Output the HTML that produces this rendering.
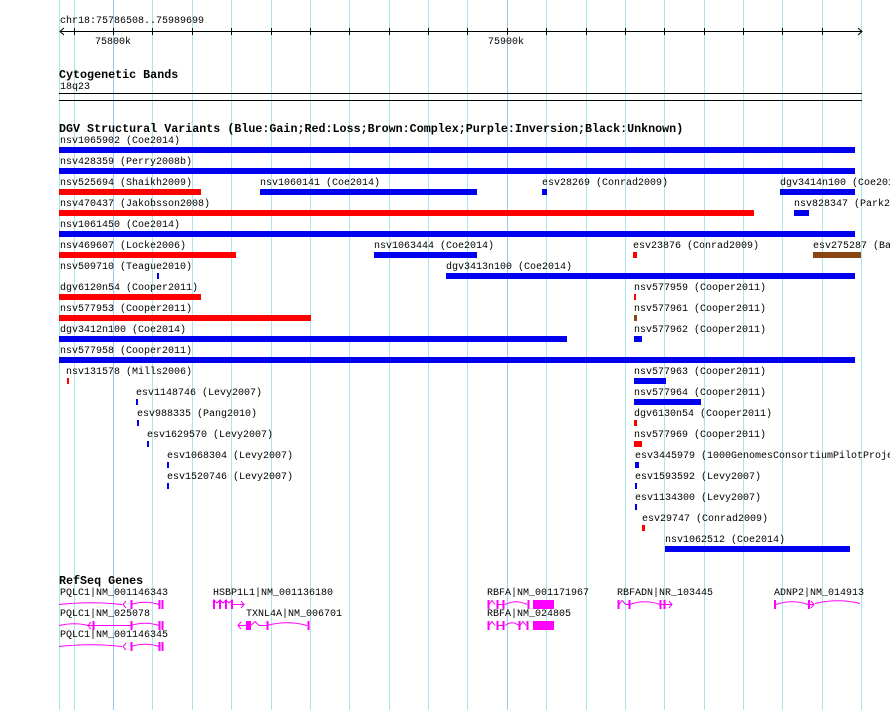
<!DOCTYPE html>
<html><head><meta charset="utf-8"><style>
html,body{margin:0;padding:0;background:#fff;width:890px;height:710px;overflow:hidden;position:relative}
.t{position:absolute;font-family:"Liberation Mono",monospace;font-size:10px;line-height:10px;white-space:nowrap;color:#000;margin-top:2px}
.b{position:absolute;font-family:"Liberation Mono",monospace;font-size:11.7px;font-weight:bold;line-height:12px;white-space:nowrap;color:#000;margin-top:1px}
.r{position:absolute;height:6px}
.bl{background:#0000ee}.rd{background:#ff0000}.br{background:#8b4513}
</style></head><body>
<svg style="position:absolute;left:0;top:0" width="890" height="710">
<g stroke="#a8e6ee" stroke-width="1">
<line x1="59.5" y1="0" x2="59.5" y2="710"/>
<line x1="74.5" y1="0" x2="74.5" y2="710"/><line x1="113.5" y1="0" x2="113.5" y2="710" stroke="#9cc8ea"/><line x1="152.5" y1="0" x2="152.5" y2="710"/><line x1="192.5" y1="0" x2="192.5" y2="710"/><line x1="231.5" y1="0" x2="231.5" y2="710"/><line x1="271.5" y1="0" x2="271.5" y2="710"/><line x1="310.5" y1="0" x2="310.5" y2="710"/><line x1="349.5" y1="0" x2="349.5" y2="710"/><line x1="389.5" y1="0" x2="389.5" y2="710"/><line x1="428.5" y1="0" x2="428.5" y2="710"/><line x1="467.5" y1="0" x2="467.5" y2="710"/><line x1="507.5" y1="0" x2="507.5" y2="710" stroke="#9cc8ea"/><line x1="546.5" y1="0" x2="546.5" y2="710"/><line x1="586.5" y1="0" x2="586.5" y2="710"/><line x1="625.5" y1="0" x2="625.5" y2="710"/><line x1="664.5" y1="0" x2="664.5" y2="710"/><line x1="704.5" y1="0" x2="704.5" y2="710"/><line x1="743.5" y1="0" x2="743.5" y2="710"/><line x1="782.5" y1="0" x2="782.5" y2="710"/><line x1="822.5" y1="0" x2="822.5" y2="710"/><line x1="861.5" y1="0" x2="861.5" y2="710"/>
</g>
<g stroke="#000" stroke-width="1" fill="none">
<line x1="60" y1="31.5" x2="862" y2="31.5"/>
<polyline points="64,28 60,31.5 64,35"/><polyline points="858,28 862,31.5 858,35"/>
<path d="M74.5 28v7M113.5 28v7M152.5 28v7M192.5 28v7M231.5 28v7M271.5 28v7M310.5 28v7M349.5 28v7M389.5 28v7M428.5 28v7M467.5 28v7M507.5 28v7M546.5 28v7M586.5 28v7M625.5 28v7M664.5 28v7M704.5 28v7M743.5 28v7M782.5 28v7M822.5 28v7"/>
<line x1="59" y1="93.5" x2="862" y2="93.5"/>
<line x1="59" y1="100.5" x2="862" y2="100.5"/>
</g>
<g stroke="#ff00ff" fill="none" stroke-width="1">
<path d="M59 604.5 Q90 601 122 604.5 M131 604.5 Q145 600 159 604.5"/>
<path d="M126 601l-3 3.5 3 3.5"/><path d="M131.5 600v9M159.5 600v9M162.5 600v9" stroke-width="2"/>
<path d="M59 625.5 Q75 622 88 625.5 L131 625.5 Q145 621 159 625.5"/>
<path d="M91 622l-3 3.5 3 3.5"/><path d="M93.5 621v9M131.5 621v9M159.5 621v9M162.5 621v9" stroke-width="2"/>
<path d="M59 646.5 Q90 643 122 646.5 M131 646.5 Q145 642 159 646.5"/>
<path d="M126 643l-3 3.5 3 3.5"/><path d="M131.5 642v9M159.5 642v9M162.5 642v9" stroke-width="2"/>
<path d="M214 609v-9l3 3 3-3v9M220 600l3 3 3-3v9M226 600l3 3 3-3v9M232 604.5h12M241 601l3 3.5-3 3.5" />
<path d="M214 600v9M220 600v9M226 600v9M232 600v9" stroke-width="2"/>
<path d="M238 625.5h9M241 622l-3 3.5 3 3.5M251 625.5l4-4 4 4h8 Q287 620 307 625.5"/>
<rect x="246" y="621" width="5" height="9" fill="#ff00ff" stroke="none"/>
<path d="M267.5 621v9M308.5 621v9" stroke-width="2"/>
<path d="M489 604.5l3-4 3 4M498 604.5h5 M505 604.5 Q516 599 527 604.5"/>
<path d="M488.5 600v9M497.5 600v9M503.5 600v9M528.5 600v9" stroke-width="2"/>
<rect x="533" y="600" width="21" height="9" fill="#ff00ff" stroke="none"/>
<path d="M489 625.5l3-4 3 4M498 625.5h5 M505 625.5 Q512 620 519 625.5M520 625.5l3-4 3 4"/>
<path d="M488.5 621v9M497.5 621v9M503.5 621v9M519.5 621v9M527.5 621v9" stroke-width="2"/>
<rect x="533" y="621" width="21" height="9" fill="#ff00ff" stroke="none"/>
<path d="M619 604.5l3-4 4 4h4 Q645 599 660 604.5h12M669 601l3 3.5-3 3.5"/>
<path d="M618.5 600v9M629.5 600v9M660.5 600v9M664.5 600v9" stroke-width="2"/>
<path d="M776 604.5 Q792 599 808 604.5h6M811 601l3 3.5-3 3.5M815 603.5 Q838 598 860 603.5"/>
<path d="M775 600v9M809 600v9" stroke-width="2"/>
</g>
</svg>

<div class="t" style="left:60px;top:15px">chr18:75786508..75989699</div>
<div class="t" style="left:95px;top:36px">75800k</div>
<div class="t" style="left:488px;top:36px">75900k</div>
<div class="b" style="left:59px;top:68px">Cytogenetic Bands</div>
<div class="t" style="left:60px;top:81px">18q23</div>
<div class="b" style="left:59px;top:122px">DGV Structural Variants (Blue:Gain;Red:Loss;Brown:Complex;Purple:Inversion;Black:Unknown)</div>

<div class="t" style="left:60px;top:135px">nsv1065902 (Coe2014)</div><div class="r bl" style="left:59px;width:796px;top:147px"></div>
<div class="t" style="left:60px;top:156px">nsv428359 (Perry2008b)</div><div class="r bl" style="left:59px;width:796px;top:168px"></div>
<div class="t" style="left:60px;top:177px">nsv525694 (Shaikh2009)</div><div class="r rd" style="left:59px;width:142px;top:189px"></div>
<div class="t" style="left:260px;top:177px">nsv1060141 (Coe2014)</div><div class="r bl" style="left:260px;width:217px;top:189px"></div>
<div class="t" style="left:542px;top:177px">esv28269 (Conrad2009)</div><div class="r bl" style="left:542px;width:5px;top:189px"></div>
<div class="t" style="left:780px;top:177px">dgv3414n100 (Coe2014)</div><div class="r bl" style="left:780px;width:75px;top:189px"></div>
<div class="t" style="left:60px;top:198px">nsv470437 (Jakobsson2008)</div><div class="r rd" style="left:59px;width:695px;top:210px"></div>
<div class="t" style="left:794px;top:198px">nsv828347 (Park2010)</div><div class="r bl" style="left:794px;width:15px;top:210px"></div>
<div class="t" style="left:60px;top:219px">nsv1061450 (Coe2014)</div><div class="r bl" style="left:59px;width:796px;top:231px"></div>
<div class="t" style="left:60px;top:240px">nsv469607 (Locke2006)</div><div class="r rd" style="left:59px;width:177px;top:252px"></div>
<div class="t" style="left:374px;top:240px">nsv1063444 (Coe2014)</div><div class="r bl" style="left:374px;width:103px;top:252px"></div>
<div class="t" style="left:633px;top:240px">esv23876 (Conrad2009)</div><div class="r rd" style="left:633px;width:4px;top:252px"></div>
<div class="t" style="left:813px;top:240px">esv275287 (Banerjee2011)</div><div class="r br" style="left:813px;width:48px;top:252px"></div>
<div class="t" style="left:60px;top:261px">nsv509710 (Teague2010)</div><div class="r bl" style="left:157px;width:2px;top:273px"></div>
<div class="t" style="left:446px;top:261px">dgv3413n100 (Coe2014)</div><div class="r bl" style="left:446px;width:409px;top:273px"></div>
<div class="t" style="left:60px;top:282px">dgv6120n54 (Cooper2011)</div><div class="r rd" style="left:59px;width:142px;top:294px"></div>
<div class="t" style="left:634px;top:282px">nsv577959 (Cooper2011)</div><div class="r rd" style="left:634px;width:2px;top:294px"></div>
<div class="t" style="left:60px;top:303px">nsv577953 (Cooper2011)</div><div class="r rd" style="left:59px;width:252px;top:315px"></div>
<div class="t" style="left:634px;top:303px">nsv577961 (Cooper2011)</div><div class="r br" style="left:634px;width:3px;top:315px"></div>
<div class="t" style="left:60px;top:324px">dgv3412n100 (Coe2014)</div><div class="r bl" style="left:59px;width:508px;top:336px"></div>
<div class="t" style="left:634px;top:324px">nsv577962 (Cooper2011)</div><div class="r bl" style="left:634px;width:8px;top:336px"></div>
<div class="t" style="left:60px;top:345px">nsv577958 (Cooper2011)</div><div class="r bl" style="left:59px;width:796px;top:357px"></div>
<div class="t" style="left:66px;top:366px">nsv131578 (Mills2006)</div><div class="r rd" style="left:67px;width:2px;top:378px"></div>
<div class="t" style="left:634px;top:366px">nsv577963 (Cooper2011)</div><div class="r bl" style="left:634px;width:32px;top:378px"></div>
<div class="t" style="left:136px;top:387px">esv1148746 (Levy2007)</div><div class="r bl" style="left:136px;width:2px;top:399px"></div>
<div class="t" style="left:634px;top:387px">nsv577964 (Cooper2011)</div><div class="r bl" style="left:634px;width:67px;top:399px"></div>
<div class="t" style="left:137px;top:408px">esv988335 (Pang2010)</div><div class="r bl" style="left:137px;width:2px;top:420px"></div>
<div class="t" style="left:634px;top:408px">dgv6130n54 (Cooper2011)</div><div class="r rd" style="left:634px;width:3px;top:420px"></div>
<div class="t" style="left:147px;top:429px">esv1629570 (Levy2007)</div><div class="r bl" style="left:147px;width:2px;top:441px"></div>
<div class="t" style="left:634px;top:429px">nsv577969 (Cooper2011)</div><div class="r rd" style="left:634px;width:8px;top:441px"></div>
<div class="t" style="left:167px;top:450px">esv1068304 (Levy2007)</div><div class="r bl" style="left:167px;width:2px;top:462px"></div>
<div class="t" style="left:635px;top:450px">esv3445979 (1000GenomesConsortiumPilotProje</div><div class="r bl" style="left:635px;width:4px;top:462px"></div>
<div class="t" style="left:167px;top:471px">esv1520746 (Levy2007)</div><div class="r bl" style="left:167px;width:2px;top:483px"></div>
<div class="t" style="left:635px;top:471px">esv1593592 (Levy2007)</div><div class="r bl" style="left:635px;width:2px;top:483px"></div>
<div class="t" style="left:635px;top:492px">esv1134300 (Levy2007)</div><div class="r bl" style="left:635px;width:2px;top:504px"></div>
<div class="t" style="left:642px;top:513px">esv29747 (Conrad2009)</div><div class="r rd" style="left:642px;width:3px;top:525px"></div>
<div class="t" style="left:665px;top:534px">nsv1062512 (Coe2014)</div><div class="r bl" style="left:665px;width:185px;top:546px"></div>

<div class="b" style="left:59px;top:574px">RefSeq Genes</div>
<div class="t" style="left:60px;top:587px">PQLC1|NM_001146343</div>
<div class="t" style="left:213px;top:587px">HSBP1L1|NM_001136180</div>
<div class="t" style="left:487px;top:587px">RBFA|NM_001171967</div>
<div class="t" style="left:617px;top:587px">RBFADN|NR_103445</div>
<div class="t" style="left:774px;top:587px">ADNP2|NM_014913</div>
<div class="t" style="left:60px;top:608px">PQLC1|NM_025078</div>
<div class="t" style="left:246px;top:608px">TXNL4A|NM_006701</div>
<div class="t" style="left:487px;top:608px">RBFA|NM_024805</div>
<div class="t" style="left:60px;top:629px">PQLC1|NM_001146345</div>
</body></html>
